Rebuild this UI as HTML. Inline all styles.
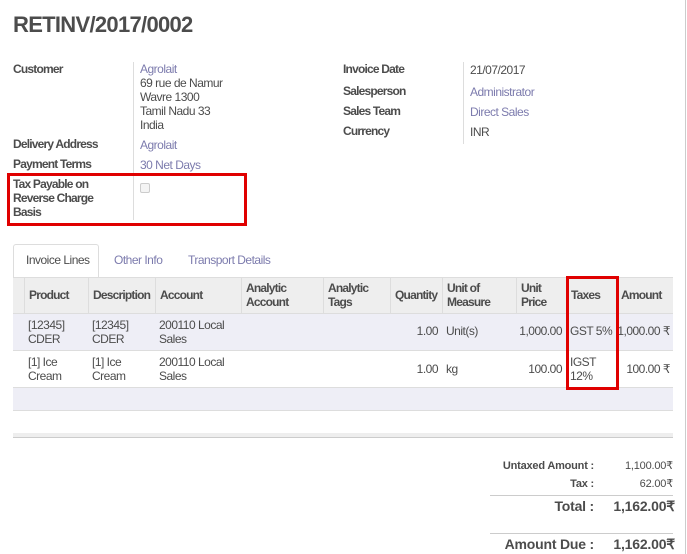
<!DOCTYPE html>
<html><head><meta charset="utf-8"><style>
body{margin:0;width:687px;height:554px;background:#fff;font-family:"Liberation Sans",sans-serif;font-size:12px;color:#4c4c4c;position:relative;overflow:hidden}
.a{position:absolute;white-space:nowrap;line-height:14px;letter-spacing:-0.5px}
.b{font-weight:bold;letter-spacing:-0.8px}
.l{color:#7c7bad}
.r{text-align:right}
.t{letter-spacing:-0.2px}
.box{position:absolute;border:3px solid #e00000;box-sizing:border-box}
.vl{position:absolute;width:1px;background:#ddd}
.hl{position:absolute;height:1px;background:#ddd}
</style></head><body>
<div class="vl" style="left:685px;top:0;height:554px;background:#ccc"></div>
<div class="a b" style="left:13px;top:12px;font-size:22px;line-height:26px;letter-spacing:-0.7px">RETINV/2017/0002</div>

<div class="a b" style="left:13px;top:62px">Customer</div>
<div class="vl" style="left:133px;top:62px;height:158px"></div>
<div class="a l" style="left:140px;top:62px">Agrolait</div>
<div class="a" style="left:140px;top:76px">69 rue de Namur</div>
<div class="a" style="left:140px;top:90px">Wavre 1300</div>
<div class="a" style="left:140px;top:104px">Tamil Nadu 33</div>
<div class="a" style="left:140px;top:118px">India</div>
<div class="a b" style="left:13px;top:137px">Delivery Address</div>
<div class="a l" style="left:140px;top:138px">Agrolait</div>
<div class="a b" style="left:13px;top:157px">Payment Terms</div>
<div class="a l" style="left:140px;top:158px">30 Net Days</div>
<div class="a b" style="left:13px;top:177px;white-space:normal;width:100px">Tax Payable on Reverse Charge Basis</div>
<div style="position:absolute;left:140px;top:183px;width:8px;height:8px;border:1px solid #ccc;border-radius:2px;background:#f4f4f4"></div>
<div class="box" style="left:7px;top:173px;width:240px;height:53px"></div>

<div class="a b" style="left:343px;top:62px">Invoice Date</div>
<div class="vl" style="left:463px;top:62px;height:82px"></div>
<div class="a" style="left:470px;top:63px">21/07/2017</div>
<div class="a b" style="left:343px;top:84px">Salesperson</div>
<div class="a l" style="left:470px;top:85px">Administrator</div>
<div class="a b" style="left:343px;top:104px">Sales Team</div>
<div class="a l" style="left:470px;top:105px">Direct Sales</div>
<div class="a b" style="left:343px;top:124px">Currency</div>
<div class="a" style="left:470px;top:125px">INR</div>

<div style="position:absolute;left:13px;top:244px;width:86px;height:34px;border:1px solid #ddd;border-bottom:none;border-radius:3px 3px 0 0;background:#fff;box-sizing:border-box"></div>
<div class="a" style="left:26px;top:253px">Invoice Lines</div>
<div class="a l" style="left:114px;top:253px">Other Info</div>
<div class="a l" style="left:188px;top:253px">Transport Details</div>

<div style="position:absolute;left:13px;top:277px;width:660px;height:36px;background:#eee;border-top:1px solid #ddd;box-sizing:border-box"></div>
<div style="position:absolute;left:13px;top:313px;width:660px;height:37px;background:#eeeef6;border-top:1px solid #ddd;box-sizing:border-box"></div>
<div class="hl" style="left:13px;top:350px;width:660px"></div>
<div style="position:absolute;left:13px;top:387px;width:660px;height:24px;background:#eeeef6;border-top:1px solid #ddd;border-bottom:1px solid #ddd;box-sizing:border-box"></div>
<div class="vl" style="left:24px;top:278px;height:35px"></div>
<div class="vl" style="left:88px;top:278px;height:35px"></div>
<div class="vl" style="left:155px;top:278px;height:35px"></div>
<div class="vl" style="left:241px;top:278px;height:35px"></div>
<div class="vl" style="left:323px;top:278px;height:35px"></div>
<div class="vl" style="left:390px;top:278px;height:35px"></div>
<div class="vl" style="left:442px;top:278px;height:35px"></div>
<div class="vl" style="left:516px;top:278px;height:35px"></div>
<div class="vl" style="left:567px;top:278px;height:35px"></div>
<div class="vl" style="left:618px;top:278px;height:35px"></div>

<div class="a b" style="left:29px;top:288px">Product</div>
<div class="a b" style="left:93px;top:288px">Description</div>
<div class="a b" style="left:160px;top:288px">Account</div>
<div class="a b" style="left:246px;top:281px">Analytic<br>Account</div>
<div class="a b" style="left:328px;top:281px">Analytic<br>Tags</div>
<div class="a b" style="left:395px;top:288px">Quantity</div>
<div class="a b" style="left:447px;top:281px">Unit of<br>Measure</div>
<div class="a b" style="left:521px;top:281px">Unit<br>Price</div>
<div class="a b" style="left:571px;top:288px">Taxes</div>
<div class="a b" style="left:621px;top:288px">Amount</div>

<div class="a" style="left:28px;top:318px">[12345]<br>CDER</div>
<div class="a" style="left:92px;top:318px">[12345]<br>CDER</div>
<div class="a" style="left:159px;top:318px">200110 Local<br>Sales</div>
<div class="a r" style="left:390px;width:48px;top:324px">1.00</div>
<div class="a" style="left:446px;top:324px">Unit(s)</div>
<div class="a r" style="left:500px;width:62px;top:324px">1,000.00</div>
<div class="a" style="left:570px;top:324px">GST 5%</div>
<div class="a r" style="left:610px;width:60px;top:324px">1,000.00 ₹</div>

<div class="a" style="left:28px;top:355px">[1] Ice<br>Cream</div>
<div class="a" style="left:92px;top:355px">[1] Ice<br>Cream</div>
<div class="a" style="left:159px;top:355px">200110 Local<br>Sales</div>
<div class="a r" style="left:390px;width:48px;top:362px">1.00</div>
<div class="a" style="left:446px;top:362px">kg</div>
<div class="a r" style="left:500px;width:62px;top:362px">100.00</div>
<div class="a" style="left:570px;top:355px">IGST<br>12%</div>
<div class="a r" style="left:610px;width:60px;top:362px">100.00 ₹</div>
<div class="box" style="left:566px;top:276px;width:53px;height:114px"></div>

<div style="position:absolute;left:13px;top:433px;width:660px;height:5px;background:#eee;border-bottom:1px solid #ccc;box-sizing:border-box"></div>

<div class="a b r t" style="left:480px;width:114px;top:459px;font-size:11px">Untaxed Amount :</div>
<div class="a r t" style="left:600px;width:73px;top:459px;font-size:11px">1,100.00₹</div>
<div class="a b r t" style="left:480px;width:114px;top:477px;font-size:11px">Tax :</div>
<div class="a r t" style="left:600px;width:73px;top:477px;font-size:11px">62.00₹</div>
<div class="hl" style="left:490px;top:495px;width:183px;background:#ccc"></div>
<div class="a b r t" style="left:480px;width:114px;top:498px;font-size:14px;line-height:16px">Total :</div>
<div class="a b r t" style="left:600px;width:75px;top:498px;font-size:14px;line-height:16px">1,162.00₹</div>
<div class="hl" style="left:490px;top:533px;width:183px;background:#ccc"></div>
<div class="a b r t" style="left:480px;width:114px;top:536px;font-size:14px;line-height:16px">Amount Due :</div>
<div class="a b r t" style="left:600px;width:75px;top:536px;font-size:14px;line-height:16px">1,162.00₹</div>
</body></html>
